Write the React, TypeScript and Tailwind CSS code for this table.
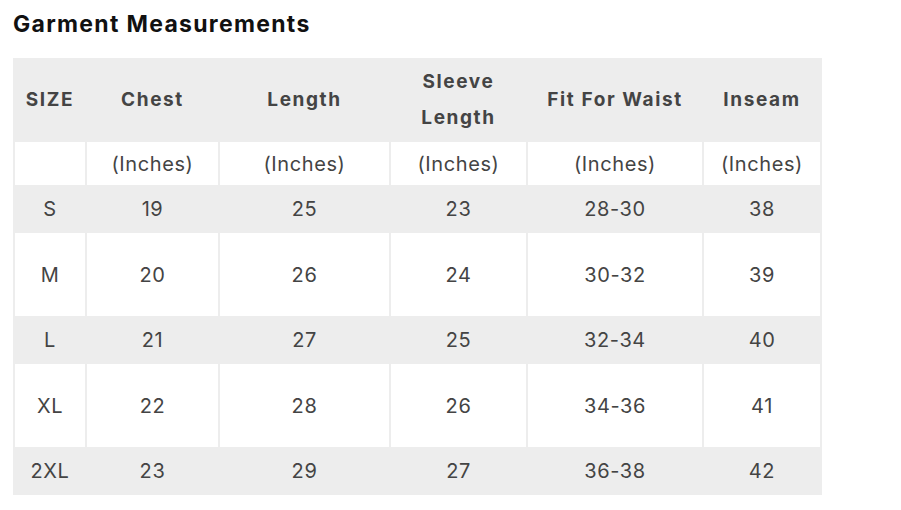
import React from 'react';

const rows = [
  { size: 'S', chest: '19', length: '25', sleeve: '23', waist: '28-30', inseam: '38', tall: false },
  { size: 'M', chest: '20', length: '26', sleeve: '24', waist: '30-32', inseam: '39', tall: true },
  { size: 'L', chest: '21', length: '27', sleeve: '25', waist: '32-34', inseam: '40', tall: false },
  { size: 'XL', chest: '22', length: '28', sleeve: '26', waist: '34-36', inseam: '41', tall: true },
  { size: '2XL', chest: '23', length: '29', sleeve: '27', waist: '36-38', inseam: '42', tall: false },
];

export default function App() {
  return (
    <div className="min-h-screen bg-white px-[13px] pt-[9px] font-['Inter',sans-serif] text-[#444]">
      <h2 className="text-[23px] font-bold leading-[30px] tracking-[1.3px] text-[#111]">Garment Measurements</h2>

      <table className="mt-[19px] w-[809px] table-fixed border-separate border-spacing-[2px] bg-[#ededed] text-center text-[20px] tracking-[0.6px]">
        <colgroup>
          <col className="w-[70px]" />
          <col className="w-[131px]" />
          <col className="w-[169px]" />
          <col className="w-[135px]" />
          <col className="w-[174px]" />
          <col className="w-[116px]" />
        </colgroup>
        <thead>
          <tr className="h-[80px] text-[19px] font-bold leading-[36px] tracking-[1.6px]">
            <th className="p-0">SIZE</th>
            <th className="p-0">Chest</th>
            <th className="p-0">Length</th>
            <th className="p-0">Sleeve<br />Length</th>
            <th className="p-0">Fit For Waist</th>
            <th className="p-0">Inseam</th>
          </tr>
        </thead>
        <tbody>
          <tr className="h-[43px]">
            <td className="bg-white p-0"></td>
            <td className="bg-white p-0">(Inches)</td>
            <td className="bg-white p-0">(Inches)</td>
            <td className="bg-white p-0">(Inches)</td>
            <td className="bg-white p-0">(Inches)</td>
            <td className="bg-white p-0">(Inches)</td>
          </tr>
          {rows.map((r) => {
            const cell = r.tall ? 'bg-white p-0' : 'p-0';
            return (
              <tr key={r.size} className={r.tall ? 'h-[83px]' : 'h-[44px]'}>
                <td className={cell}>{r.size}</td>
                <td className={cell}>{r.chest}</td>
                <td className={cell}>{r.length}</td>
                <td className={cell}>{r.sleeve}</td>
                <td className={cell}>{r.waist}</td>
                <td className={cell}>{r.inseam}</td>
              </tr>
            );
          })}
        </tbody>
      </table>
    </div>
  );
}
